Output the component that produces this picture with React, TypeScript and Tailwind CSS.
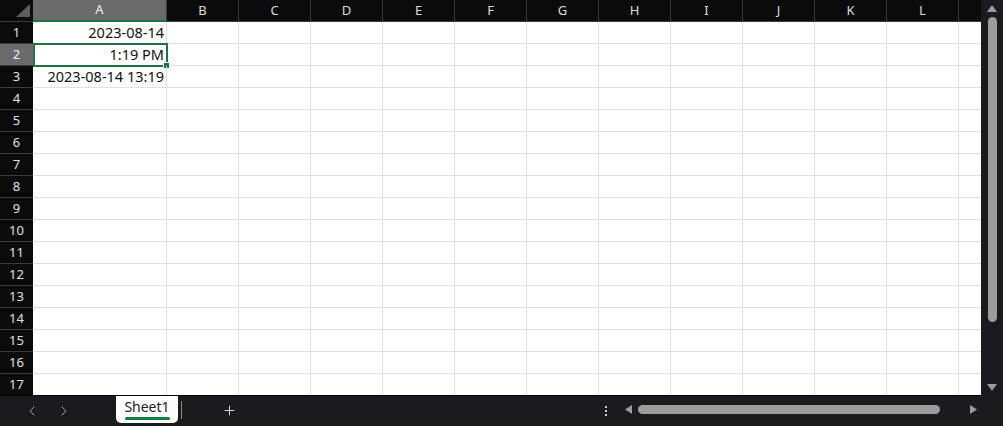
import { ChevronLeft, ChevronRight, Plus } from 'lucide-react';

const COLS = ['B', 'C', 'D', 'E', 'F', 'G', 'H', 'I', 'J', 'K', 'L', 'M'];
const ROWS = Array.from({ length: 17 }, (_, i) => i + 1);

const VALUES: Record<number, string> = {
  1: '2023-08-14',
  2: '1:19 PM',
  3: '2023-08-14 13:19',
};

function SelectAll() {
  return (
    <div className="w-[33px] h-[22px] shrink-0 bg-[#0b0b0b] border-b border-[#3c3c3c] flex items-end justify-end pr-[3px] pb-[4px]">
      <svg width="14" height="13" viewBox="0 0 14 13">
        <polygon points="14,0 14,13 0,13" fill="#5e5e5e" />
      </svg>
    </div>
  );
}

export default function App() {
  return (
    <div className="w-[1003px] h-[426px] overflow-hidden flex flex-col bg-[#1b1a1d] font-['Noto_Sans',sans-serif] select-none">
      <div className="flex h-[396px]">
        {/* Sheet grid */}
        <div className="flex-1 overflow-hidden bg-white border-b border-black">
          {/* Column headers */}
          <div className="flex">
            <SelectAll />
            <div className="w-[134px] h-[22px] shrink-0 bg-[#6b6b6b] border-r border-[#3c3c3c] border-b-2 border-b-[#1f7244] flex items-center justify-center text-[13px] text-[#f0f0f0]">
              A
            </div>
            {COLS.map((c) => (
              <div
                key={c}
                className="w-[72px] h-[22px] shrink-0 bg-[#0b0b0b] border-r border-b border-[#3c3c3c] flex items-center justify-center text-[13px] text-[#dcdcdc]"
              >
                {c}
              </div>
            ))}
          </div>

          {/* Rows */}
          {ROWS.map((r) => (
            <div key={r} className="flex h-[22px]">
              <div
                className={`w-[33px] shrink-0 border-b border-[#3c3c3c] flex items-center justify-center text-[13px] ${
                  r === 2 ? 'bg-[#6b6b6b] text-[#f4f4f4]' : 'bg-[#0b0b0b] text-[#e0e0e0]'
                }`}
              >
                {r}
              </div>
              <div className="relative w-[134px] shrink-0 border-r border-b border-[#e1e1e1] flex items-center justify-end pr-[2px] text-[14.5px] text-[#111]">
                {VALUES[r]}
                {r === 2 && (
                  <>
                    <div className="absolute left-0 -top-px w-[135px] h-[24px] border-2 border-[#1f7244]" />
                    <div className="absolute -right-[4px] -bottom-[4px] w-[7px] h-[7px] bg-[#1f7244] border border-white" />
                  </>
                )}
              </div>
              {COLS.map((c) => (
                <div key={c} className="w-[72px] shrink-0 border-r border-b border-[#e1e1e1]" />
              ))}
            </div>
          ))}
        </div>

        {/* Vertical scrollbar */}
        <div className="w-[22px] shrink-0 bg-[#1b1a1f] flex flex-col items-center pt-[5px] pb-[5px]">
          <svg width="10" height="7" viewBox="0 0 10 7">
            <polygon points="5,0 10,7 0,7" fill="#9c9c9c" />
          </svg>
          <div className="w-[9px] h-[305px] mt-[5px] rounded-full bg-[#9c9c9c]" />
          <div className="flex-1" />
          <svg width="10" height="7" viewBox="0 0 10 7">
            <polygon points="0,0 10,0 5,7" fill="#9c9c9c" />
          </svg>
        </div>
      </div>

      {/* Bottom bar */}
      <div className="flex-1 flex items-start bg-[#1b1a1d]">
        <div className="w-[116px] h-full flex items-center pl-[24px] gap-[16px] text-[#a0a0a0]">
          <ChevronLeft size={16} strokeWidth={1.5} />
          <ChevronRight size={16} strokeWidth={1.5} />
        </div>
        <div className="w-[62px] h-[27px] bg-white rounded-b-[5px] flex flex-col items-center pt-[1px]">
          <span className="text-[14px] leading-[19px] text-[#222]">Sheet1</span>
          <div className="w-[45px] h-[3px] mt-[1px] bg-[#137c3f] rounded-full" />
        </div>
        <div className="w-px h-[18px] mt-[5px] ml-[3px] bg-[#8a8a8a]" />
        <div className="ml-[40px] mt-[7px] text-[#e8e8e8]">
          <Plus size={15} strokeWidth={1.5} />
        </div>
        <div className="flex-1" />
        <div className="flex flex-col gap-[2px] mt-[10px] mr-[18px]">
          <div className="w-[2px] h-[2px] bg-[#d0d0d0]" />
          <div className="w-[2px] h-[2px] bg-[#d0d0d0]" />
          <div className="w-[2px] h-[2px] bg-[#d0d0d0]" />
        </div>
        <div className="flex items-center mt-[9px] mr-[26px]">
          <svg width="7" height="9" viewBox="0 0 7 9">
            <polygon points="7,0 7,9 0,4.5" fill="#9c9c9c" />
          </svg>
          <div className="w-[302px] h-[9px] ml-[6px] rounded-full bg-[#9c9c9c]" />
          <div className="w-[30px]" />
          <svg width="7" height="9" viewBox="0 0 7 9">
            <polygon points="0,0 7,4.5 0,9" fill="#9c9c9c" />
          </svg>
        </div>
      </div>
    </div>
  );
}
